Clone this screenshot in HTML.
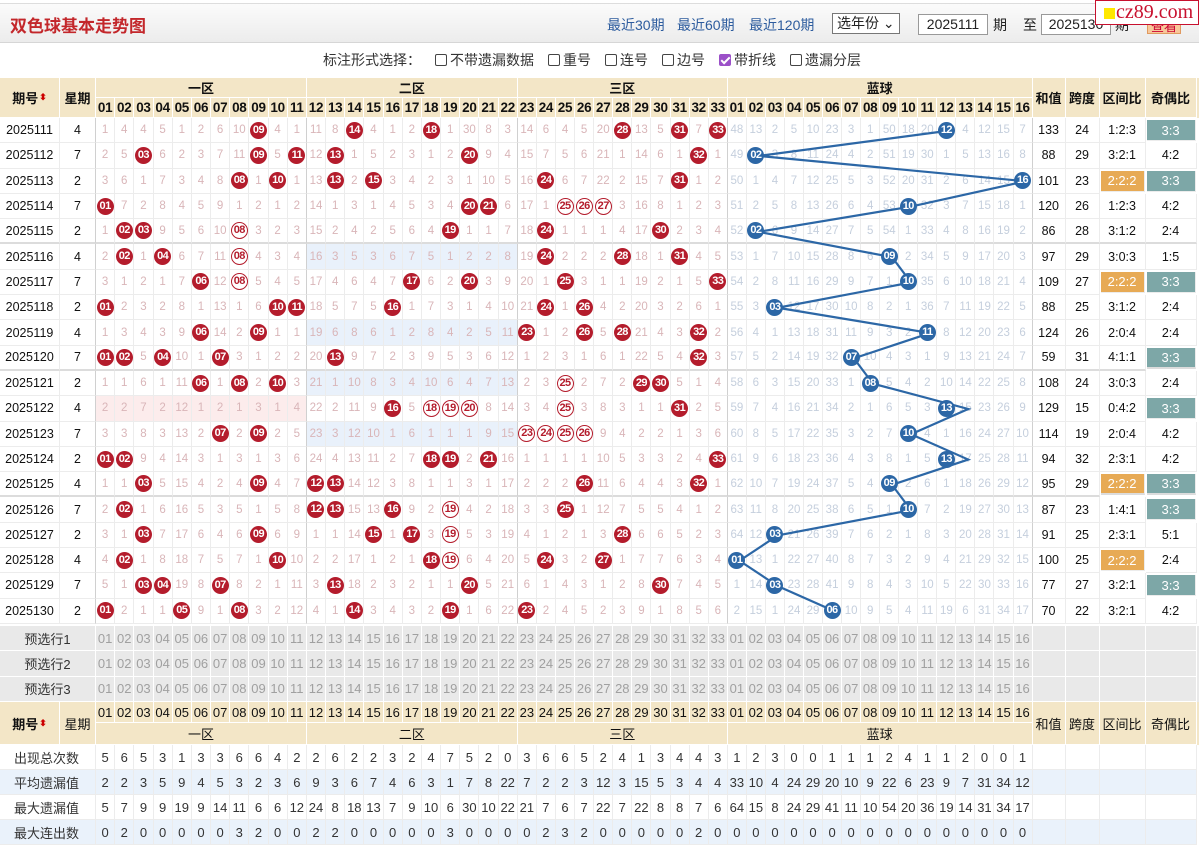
<!DOCTYPE html>
<html><head><meta charset="utf-8">
<style>
*{margin:0;padding:0;box-sizing:border-box}
body{width:1199px;height:849px;overflow:hidden;background:#fff;font-family:"Liberation Sans","Noto Sans CJK SC",sans-serif;position:relative;color:#222}
.top{position:absolute;left:0;top:3px;width:1199px;height:40px;background:linear-gradient(#fbfbfb,#ececec);border-top:1px solid #ddd;border-bottom:1px solid #d6d6d6}
.title{position:absolute;left:10px;top:8px;font-size:17px;font-weight:bold;color:#c3272b}
.lk{position:absolute;top:11px;font-size:14px;color:#2d5c9e}
.sel{position:absolute;left:832px;top:9px;width:68px;height:21px;border:1px solid #777;background:#fff;font-size:14px;padding-left:4px;line-height:19px}
.inp{position:absolute;top:10px;width:70px;height:21px;border:1px solid #999;background:#fff;font-size:14px;line-height:19px;text-align:center}
.tx{position:absolute;top:11px;font-size:14px}
.btn{position:absolute;left:1147px;top:11px;width:34px;height:19px;background:#f8c89a;border:1px solid #e09a60;color:#c03;font-size:13px;text-align:center}
.logo{position:absolute;left:1095px;top:0;width:104px;height:25px;background:#fff;border:1px solid #c8102e;font-family:"Liberation Serif",serif;font-size:20px;color:#c8102e;line-height:22px;padding-left:20px}
.logo:before{content:"";position:absolute;left:8px;top:7px;width:11px;height:11px;background:#ffe800}
.opt{position:absolute;top:50px;left:323px;font-size:14px;color:#333;white-space:nowrap}
.cb{display:inline-block;width:12px;height:12px;border:1px solid #444;border-radius:2px;vertical-align:-1px;margin:0 3px 0 14px;background:#fff}
.cb.on{background:#9b50c8;border-color:#9b50c8;position:relative}
.cb.on:after{content:"";position:absolute;left:3px;top:0;width:3px;height:7px;border:solid #fff;border-width:0 2px 2px 0;transform:rotate(45deg)}
.g{display:grid;grid-template-columns:60px 36px repeat(22,19.18px) repeat(11,19.1px) repeat(16,19.06px) 33px 34px 46px 51px;position:absolute;left:0;width:1199px}
.g>span,.r>span{display:flex;align-items:center;justify-content:center;border-right:1px solid #ececec;border-bottom:1px solid #ececec;font-size:12px;white-space:nowrap;overflow:visible}
.hd{top:78px;grid-template-rows:20px 20px;background:#f3e6c7}
.hd>span{border-color:#fff;font-weight:bold;font-size:13px;color:#111}
.hd .n{font-size:13.5px;letter-spacing:-0.3px}
.ar{color:#c00;font-size:9px;margin-left:1px}
.dat{top:118px;grid-auto-rows:25.3px}
.r{display:contents}
.r>span{height:25.3px;color:#d9b5b8;font-size:11.5px}
.r>span:nth-child(n+36):nth-child(-n+51){color:#c5cfdd}
.r>span:nth-child(1),.r>span:nth-child(2),.r>span:nth-child(n+52){color:#111;font-size:12.5px}
.r>span:nth-child(13),.r>span:nth-child(24),.r>span:nth-child(35){border-right:1px solid #d0d0d0}
.r>span:nth-child(2),.r>span:nth-child(51){border-right:1px solid #d0d0d0}
.r.e>span{border-bottom:2px solid #dcdcdc}
.r.z2>span:nth-child(n+14):nth-child(-n+24){background:#e9f1fb}
.r.z1>span:nth-child(n+3):nth-child(-n+13){background:#fcecec}
b,i,u{display:inline-block;flex:none;width:17px;height:17px;border-radius:50%;font-style:normal;text-decoration:none;font-weight:bold;font-size:11px;line-height:17px;text-align:center;letter-spacing:-0.6px}
b{background:#b41c2c;color:#fff}
i{background:#fff;border:1.5px solid #b41c2c;color:#b41c2c;line-height:14px}
u{background:#2c67a6;color:#fff;position:relative;z-index:2}
.r>span.t{background:#7da7a7;color:#fff;height:21px;margin:2px 1px;font-size:13px}
.r>span.o{background:#e7aa55;color:#fff;height:21px;margin:2px 1px;font-size:13px}
svg{position:absolute;left:0;top:0;z-index:1;pointer-events:none}
.pre{grid-template-rows:repeat(3,25.3px);top:626px;background:#e9e9e9}
.pre>span{border-color:#fff;color:#a0a0a0;font-size:13px}
.pre .lb{grid-column:1/3;color:#333}
.ft{top:702px;grid-template-rows:21px 22px;background:#f3e6c7}
.ft>span{border-color:#fff;font-size:13px;color:#111}
.st{top:745px;grid-template-rows:repeat(4,25px)}
.st>span{font-size:13px;color:#333}
.st .lb{grid-column:1/3;justify-content:flex-start;padding-left:14px}
.st .b{background:#eaf2fb}
</style></head><body>
<div class="top">
<div class="title">双色球基本走势图</div>
<div class="lk" style="left:607px">最近30期</div><div class="lk" style="left:677px">最近60期</div><div class="lk" style="left:749px">最近120期</div>
<div class="sel">选年份 ⌄</div>
<div class="inp" style="left:918px">2025111</div><div class="tx" style="left:993px">期</div><div class="tx" style="left:1023px">至</div>
<div class="inp" style="left:1041px">2025130</div><div class="tx" style="left:1115px">期</div>
<div class="btn">查看</div>
</div>
<div class="logo">cz89.com</div>
<div class="opt">标注形式选择：<span class="cb"></span>不带遗漏数据<span class="cb"></span>重号<span class="cb"></span>连号<span class="cb"></span>边号<span class="cb on"></span>带折线<span class="cb"></span>遗漏分层</div>

<div class="g hd">
<span style="grid-row:1/3;grid-column:1">期号<span class="ar">⬍</span></span><span style="grid-row:1/3;grid-column:2">星期</span>
<span style="grid-column:3/14">一区</span><span style="grid-column:14/25">二区</span><span style="grid-column:25/36">三区</span><span style="grid-column:36/52">蓝球</span>
<span style="grid-row:1/3;grid-column:52">和值</span><span style="grid-row:1/3;grid-column:53">跨度</span><span style="grid-row:1/3;grid-column:54">区间比</span><span style="grid-row:1/3;grid-column:55">奇偶比</span>
<span class="n" style="grid-row:2;grid-column:3">01</span><span class="n" style="grid-row:2">02</span><span class="n" style="grid-row:2">03</span><span class="n" style="grid-row:2">04</span><span class="n" style="grid-row:2">05</span><span class="n" style="grid-row:2">06</span><span class="n" style="grid-row:2">07</span><span class="n" style="grid-row:2">08</span><span class="n" style="grid-row:2">09</span><span class="n" style="grid-row:2">10</span><span class="n" style="grid-row:2">11</span><span class="n" style="grid-row:2">12</span><span class="n" style="grid-row:2">13</span><span class="n" style="grid-row:2">14</span><span class="n" style="grid-row:2">15</span><span class="n" style="grid-row:2">16</span><span class="n" style="grid-row:2">17</span><span class="n" style="grid-row:2">18</span><span class="n" style="grid-row:2">19</span><span class="n" style="grid-row:2">20</span><span class="n" style="grid-row:2">21</span><span class="n" style="grid-row:2">22</span><span class="n" style="grid-row:2">23</span><span class="n" style="grid-row:2">24</span><span class="n" style="grid-row:2">25</span><span class="n" style="grid-row:2">26</span><span class="n" style="grid-row:2">27</span><span class="n" style="grid-row:2">28</span><span class="n" style="grid-row:2">29</span><span class="n" style="grid-row:2">30</span><span class="n" style="grid-row:2">31</span><span class="n" style="grid-row:2">32</span><span class="n" style="grid-row:2">33</span><span class="n" style="grid-row:2">01</span><span class="n" style="grid-row:2">02</span><span class="n" style="grid-row:2">03</span><span class="n" style="grid-row:2">04</span><span class="n" style="grid-row:2">05</span><span class="n" style="grid-row:2">06</span><span class="n" style="grid-row:2">07</span><span class="n" style="grid-row:2">08</span><span class="n" style="grid-row:2">09</span><span class="n" style="grid-row:2">10</span><span class="n" style="grid-row:2">11</span><span class="n" style="grid-row:2">12</span><span class="n" style="grid-row:2">13</span><span class="n" style="grid-row:2">14</span><span class="n" style="grid-row:2">15</span><span class="n" style="grid-row:2">16</span>
</div>

<div class="g dat">
<div class="r"><span>2025111</span><span>4</span><span>1</span><span>4</span><span>4</span><span>5</span><span>1</span><span>2</span><span>6</span><span>10</span><span><b>09</b></span><span>4</span><span>1</span><span>11</span><span>8</span><span><b>14</b></span><span>4</span><span>1</span><span>2</span><span><b>18</b></span><span>1</span><span>30</span><span>8</span><span>3</span><span>14</span><span>6</span><span>4</span><span>5</span><span>20</span><span><b>28</b></span><span>13</span><span>5</span><span><b>31</b></span><span>7</span><span><b>33</b></span><span>48</span><span>13</span><span>2</span><span>5</span><span>10</span><span>23</span><span>3</span><span>1</span><span>50</span><span>18</span><span>20</span><span><u>12</u></span><span>4</span><span>12</span><span>15</span><span>7</span><span>133</span><span>24</span><span>1:2:3</span><span class="t">3:3</span></div>
<div class="r"><span>2025112</span><span>7</span><span>2</span><span>5</span><span><b>03</b></span><span>6</span><span>2</span><span>3</span><span>7</span><span>11</span><span><b>09</b></span><span>5</span><span><b>11</b></span><span>12</span><span><b>13</b></span><span>1</span><span>5</span><span>2</span><span>3</span><span>1</span><span>2</span><span><b>20</b></span><span>9</span><span>4</span><span>15</span><span>7</span><span>5</span><span>6</span><span>21</span><span>1</span><span>14</span><span>6</span><span>1</span><span><b>32</b></span><span>1</span><span>49</span><span><u>02</u></span><span>3</span><span>8</span><span>11</span><span>24</span><span>4</span><span>2</span><span>51</span><span>19</span><span>30</span><span>1</span><span>5</span><span>13</span><span>16</span><span>8</span><span>88</span><span>29</span><span>3:2:1</span><span>4:2</span></div>
<div class="r"><span>2025113</span><span>2</span><span>3</span><span>6</span><span>1</span><span>7</span><span>3</span><span>4</span><span>8</span><span><b>08</b></span><span>1</span><span><b>10</b></span><span>1</span><span>13</span><span><b>13</b></span><span>2</span><span><b>15</b></span><span>3</span><span>4</span><span>2</span><span>3</span><span>1</span><span>10</span><span>5</span><span>16</span><span><b>24</b></span><span>6</span><span>7</span><span>22</span><span>2</span><span>15</span><span>7</span><span><b>31</b></span><span>1</span><span>2</span><span>50</span><span>1</span><span>4</span><span>7</span><span>12</span><span>25</span><span>5</span><span>3</span><span>52</span><span>20</span><span>31</span><span>2</span><span>6</span><span>14</span><span>15</span><span><u>16</u></span><span>101</span><span>23</span><span class="o">2:2:2</span><span class="t">3:3</span></div>
<div class="r"><span>2025114</span><span>7</span><span><b>01</b></span><span>7</span><span>2</span><span>8</span><span>4</span><span>5</span><span>9</span><span>1</span><span>2</span><span>1</span><span>2</span><span>14</span><span>1</span><span>3</span><span>1</span><span>4</span><span>5</span><span>3</span><span>4</span><span><b>20</b></span><span><b>21</b></span><span>6</span><span>17</span><span>1</span><span><i>25</i></span><span><i>26</i></span><span><i>27</i></span><span>3</span><span>16</span><span>8</span><span>1</span><span>2</span><span>3</span><span>51</span><span>2</span><span>5</span><span>8</span><span>13</span><span>26</span><span>6</span><span>4</span><span>53</span><span><u>10</u></span><span>32</span><span>3</span><span>7</span><span>15</span><span>18</span><span>1</span><span>120</span><span>26</span><span>1:2:3</span><span>4:2</span></div>
<div class="r e"><span>2025115</span><span>2</span><span>1</span><span><b>02</b></span><span><b>03</b></span><span>9</span><span>5</span><span>6</span><span>10</span><span><i>08</i></span><span>3</span><span>2</span><span>3</span><span>15</span><span>2</span><span>4</span><span>2</span><span>5</span><span>6</span><span>4</span><span><b>19</b></span><span>1</span><span>1</span><span>7</span><span>18</span><span><b>24</b></span><span>1</span><span>1</span><span>1</span><span>4</span><span>17</span><span><b>30</b></span><span>2</span><span>3</span><span>4</span><span>52</span><span><u>02</u></span><span>6</span><span>9</span><span>14</span><span>27</span><span>7</span><span>5</span><span>54</span><span>1</span><span>33</span><span>4</span><span>8</span><span>16</span><span>19</span><span>2</span><span>86</span><span>28</span><span>3:1:2</span><span>2:4</span></div>
<div class="r z2"><span>2025116</span><span>4</span><span>2</span><span><b>02</b></span><span>1</span><span><b>04</b></span><span>6</span><span>7</span><span>11</span><span><i>08</i></span><span>4</span><span>3</span><span>4</span><span>16</span><span>3</span><span>5</span><span>3</span><span>6</span><span>7</span><span>5</span><span>1</span><span>2</span><span>2</span><span>8</span><span>19</span><span><b>24</b></span><span>2</span><span>2</span><span>2</span><span><b>28</b></span><span>18</span><span>1</span><span><b>31</b></span><span>4</span><span>5</span><span>53</span><span>1</span><span>7</span><span>10</span><span>15</span><span>28</span><span>8</span><span>6</span><span><u>09</u></span><span>2</span><span>34</span><span>5</span><span>9</span><span>17</span><span>20</span><span>3</span><span>97</span><span>29</span><span>3:0:3</span><span>1:5</span></div>
<div class="r"><span>2025117</span><span>7</span><span>3</span><span>1</span><span>2</span><span>1</span><span>7</span><span><b>06</b></span><span>12</span><span><i>08</i></span><span>5</span><span>4</span><span>5</span><span>17</span><span>4</span><span>6</span><span>4</span><span>7</span><span><b>17</b></span><span>6</span><span>2</span><span><b>20</b></span><span>3</span><span>9</span><span>20</span><span>1</span><span><b>25</b></span><span>3</span><span>1</span><span>1</span><span>19</span><span>2</span><span>1</span><span>5</span><span><b>33</b></span><span>54</span><span>2</span><span>8</span><span>11</span><span>16</span><span>29</span><span>9</span><span>7</span><span>1</span><span><u>10</u></span><span>35</span><span>6</span><span>10</span><span>18</span><span>21</span><span>4</span><span>109</span><span>27</span><span class="o">2:2:2</span><span class="t">3:3</span></div>
<div class="r"><span>2025118</span><span>2</span><span><b>01</b></span><span>2</span><span>3</span><span>2</span><span>8</span><span>1</span><span>13</span><span>1</span><span>6</span><span><b>10</b></span><span><b>11</b></span><span>18</span><span>5</span><span>7</span><span>5</span><span><b>16</b></span><span>1</span><span>7</span><span>3</span><span>1</span><span>4</span><span>10</span><span>21</span><span><b>24</b></span><span>1</span><span><b>26</b></span><span>4</span><span>2</span><span>20</span><span>3</span><span>2</span><span>6</span><span>1</span><span>55</span><span>3</span><span><u>03</u></span><span>12</span><span>17</span><span>30</span><span>10</span><span>8</span><span>2</span><span>1</span><span>36</span><span>7</span><span>11</span><span>19</span><span>22</span><span>5</span><span>88</span><span>25</span><span>3:1:2</span><span>2:4</span></div>
<div class="r z2"><span>2025119</span><span>4</span><span>1</span><span>3</span><span>4</span><span>3</span><span>9</span><span><b>06</b></span><span>14</span><span>2</span><span><b>09</b></span><span>1</span><span>1</span><span>19</span><span>6</span><span>8</span><span>6</span><span>1</span><span>2</span><span>8</span><span>4</span><span>2</span><span>5</span><span>11</span><span><b>23</b></span><span>1</span><span>2</span><span><b>26</b></span><span>5</span><span><b>28</b></span><span>21</span><span>4</span><span>3</span><span><b>32</b></span><span>2</span><span>56</span><span>4</span><span>1</span><span>13</span><span>18</span><span>31</span><span>11</span><span>9</span><span>3</span><span>2</span><span><u>11</u></span><span>8</span><span>12</span><span>20</span><span>23</span><span>6</span><span>124</span><span>26</span><span>2:0:4</span><span>2:4</span></div>
<div class="r e"><span>2025120</span><span>7</span><span><b>01</b></span><span><b>02</b></span><span>5</span><span><b>04</b></span><span>10</span><span>1</span><span><b>07</b></span><span>3</span><span>1</span><span>2</span><span>2</span><span>20</span><span><b>13</b></span><span>9</span><span>7</span><span>2</span><span>3</span><span>9</span><span>5</span><span>3</span><span>6</span><span>12</span><span>1</span><span>2</span><span>3</span><span>1</span><span>6</span><span>1</span><span>22</span><span>5</span><span>4</span><span><b>32</b></span><span>3</span><span>57</span><span>5</span><span>2</span><span>14</span><span>19</span><span>32</span><span><u>07</u></span><span>10</span><span>4</span><span>3</span><span>1</span><span>9</span><span>13</span><span>21</span><span>24</span><span>7</span><span>59</span><span>31</span><span>4:1:1</span><span class="t">3:3</span></div>
<div class="r z2"><span>2025121</span><span>2</span><span>1</span><span>1</span><span>6</span><span>1</span><span>11</span><span><b>06</b></span><span>1</span><span><b>08</b></span><span>2</span><span><b>10</b></span><span>3</span><span>21</span><span>1</span><span>10</span><span>8</span><span>3</span><span>4</span><span>10</span><span>6</span><span>4</span><span>7</span><span>13</span><span>2</span><span>3</span><span><i>25</i></span><span>2</span><span>7</span><span>2</span><span><b>29</b></span><span><b>30</b></span><span>5</span><span>1</span><span>4</span><span>58</span><span>6</span><span>3</span><span>15</span><span>20</span><span>33</span><span>1</span><span><u>08</u></span><span>5</span><span>4</span><span>2</span><span>10</span><span>14</span><span>22</span><span>25</span><span>8</span><span>108</span><span>24</span><span>3:0:3</span><span>2:4</span></div>
<div class="r z1"><span>2025122</span><span>4</span><span>2</span><span>2</span><span>7</span><span>2</span><span>12</span><span>1</span><span>2</span><span>1</span><span>3</span><span>1</span><span>4</span><span>22</span><span>2</span><span>11</span><span>9</span><span><b>16</b></span><span>5</span><span><i>18</i></span><span><i>19</i></span><span><i>20</i></span><span>8</span><span>14</span><span>3</span><span>4</span><span><i>25</i></span><span>3</span><span>8</span><span>3</span><span>1</span><span>1</span><span><b>31</b></span><span>2</span><span>5</span><span>59</span><span>7</span><span>4</span><span>16</span><span>21</span><span>34</span><span>2</span><span>1</span><span>6</span><span>5</span><span>3</span><span><u>13</u></span><span>15</span><span>23</span><span>26</span><span>9</span><span>129</span><span>15</span><span>0:4:2</span><span class="t">3:3</span></div>
<div class="r z2"><span>2025123</span><span>7</span><span>3</span><span>3</span><span>8</span><span>3</span><span>13</span><span>2</span><span><b>07</b></span><span>2</span><span><b>09</b></span><span>2</span><span>5</span><span>23</span><span>3</span><span>12</span><span>10</span><span>1</span><span>6</span><span>1</span><span>1</span><span>1</span><span>9</span><span>15</span><span><i>23</i></span><span><i>24</i></span><span><i>25</i></span><span><i>26</i></span><span>9</span><span>4</span><span>2</span><span>2</span><span>1</span><span>3</span><span>6</span><span>60</span><span>8</span><span>5</span><span>17</span><span>22</span><span>35</span><span>3</span><span>2</span><span>7</span><span><u>10</u></span><span>4</span><span>1</span><span>16</span><span>24</span><span>27</span><span>10</span><span>114</span><span>19</span><span>2:0:4</span><span>4:2</span></div>
<div class="r"><span>2025124</span><span>2</span><span><b>01</b></span><span><b>02</b></span><span>9</span><span>4</span><span>14</span><span>3</span><span>1</span><span>3</span><span>1</span><span>3</span><span>6</span><span>24</span><span>4</span><span>13</span><span>11</span><span>2</span><span>7</span><span><b>18</b></span><span><b>19</b></span><span>2</span><span><b>21</b></span><span>16</span><span>1</span><span>1</span><span>1</span><span>1</span><span>10</span><span>5</span><span>3</span><span>3</span><span>2</span><span>4</span><span><b>33</b></span><span>61</span><span>9</span><span>6</span><span>18</span><span>23</span><span>36</span><span>4</span><span>3</span><span>8</span><span>1</span><span>5</span><span><u>13</u></span><span>17</span><span>25</span><span>28</span><span>11</span><span>94</span><span>32</span><span>2:3:1</span><span>4:2</span></div>
<div class="r e"><span>2025125</span><span>4</span><span>1</span><span>1</span><span><b>03</b></span><span>5</span><span>15</span><span>4</span><span>2</span><span>4</span><span><b>09</b></span><span>4</span><span>7</span><span><b>12</b></span><span><b>13</b></span><span>14</span><span>12</span><span>3</span><span>8</span><span>1</span><span>1</span><span>3</span><span>1</span><span>17</span><span>2</span><span>2</span><span>2</span><span><b>26</b></span><span>11</span><span>6</span><span>4</span><span>4</span><span>3</span><span><b>32</b></span><span>1</span><span>62</span><span>10</span><span>7</span><span>19</span><span>24</span><span>37</span><span>5</span><span>4</span><span><u>09</u></span><span>2</span><span>6</span><span>1</span><span>18</span><span>26</span><span>29</span><span>12</span><span>95</span><span>29</span><span class="o">2:2:2</span><span class="t">3:3</span></div>
<div class="r"><span>2025126</span><span>7</span><span>2</span><span><b>02</b></span><span>1</span><span>6</span><span>16</span><span>5</span><span>3</span><span>5</span><span>1</span><span>5</span><span>8</span><span><b>12</b></span><span><b>13</b></span><span>15</span><span>13</span><span><b>16</b></span><span>9</span><span>2</span><span><i>19</i></span><span>4</span><span>2</span><span>18</span><span>3</span><span>3</span><span><b>25</b></span><span>1</span><span>12</span><span>7</span><span>5</span><span>5</span><span>4</span><span>1</span><span>2</span><span>63</span><span>11</span><span>8</span><span>20</span><span>25</span><span>38</span><span>6</span><span>5</span><span>1</span><span><u>10</u></span><span>7</span><span>2</span><span>19</span><span>27</span><span>30</span><span>13</span><span>87</span><span>23</span><span>1:4:1</span><span class="t">3:3</span></div>
<div class="r"><span>2025127</span><span>2</span><span>3</span><span>1</span><span><b>03</b></span><span>7</span><span>17</span><span>6</span><span>4</span><span>6</span><span><b>09</b></span><span>6</span><span>9</span><span>1</span><span>1</span><span>14</span><span><b>15</b></span><span>1</span><span><b>17</b></span><span>3</span><span><i>19</i></span><span>5</span><span>3</span><span>19</span><span>4</span><span>1</span><span>2</span><span>1</span><span>3</span><span><b>28</b></span><span>6</span><span>6</span><span>5</span><span>2</span><span>3</span><span>64</span><span>12</span><span><u>03</u></span><span>21</span><span>26</span><span>39</span><span>7</span><span>6</span><span>2</span><span>1</span><span>8</span><span>3</span><span>20</span><span>28</span><span>31</span><span>14</span><span>91</span><span>25</span><span>2:3:1</span><span>5:1</span></div>
<div class="r"><span>2025128</span><span>4</span><span>4</span><span><b>02</b></span><span>1</span><span>8</span><span>18</span><span>7</span><span>5</span><span>7</span><span>1</span><span><b>10</b></span><span>10</span><span>2</span><span>2</span><span>17</span><span>1</span><span>2</span><span>1</span><span><b>18</b></span><span><i>19</i></span><span>6</span><span>4</span><span>20</span><span>5</span><span><b>24</b></span><span>3</span><span>2</span><span><b>27</b></span><span>1</span><span>7</span><span>7</span><span>6</span><span>3</span><span>4</span><span><u>01</u></span><span>13</span><span>1</span><span>22</span><span>27</span><span>40</span><span>8</span><span>7</span><span>3</span><span>2</span><span>9</span><span>4</span><span>21</span><span>29</span><span>32</span><span>15</span><span>100</span><span>25</span><span class="o">2:2:2</span><span>2:4</span></div>
<div class="r"><span>2025129</span><span>7</span><span>5</span><span>1</span><span><b>03</b></span><span><b>04</b></span><span>19</span><span>8</span><span><b>07</b></span><span>8</span><span>2</span><span>1</span><span>11</span><span>3</span><span><b>13</b></span><span>18</span><span>2</span><span>3</span><span>2</span><span>1</span><span>1</span><span><b>20</b></span><span>5</span><span>21</span><span>6</span><span>1</span><span>4</span><span>3</span><span>1</span><span>2</span><span>8</span><span><b>30</b></span><span>7</span><span>4</span><span>5</span><span>1</span><span>14</span><span><u>03</u></span><span>23</span><span>28</span><span>41</span><span>9</span><span>8</span><span>4</span><span>3</span><span>10</span><span>5</span><span>22</span><span>30</span><span>33</span><span>16</span><span>77</span><span>27</span><span>3:2:1</span><span class="t">3:3</span></div>
<div class="r"><span>2025130</span><span>2</span><span><b>01</b></span><span>2</span><span>1</span><span>1</span><span><b>05</b></span><span>9</span><span>1</span><span><b>08</b></span><span>3</span><span>2</span><span>12</span><span>4</span><span>1</span><span><b>14</b></span><span>3</span><span>4</span><span>3</span><span>2</span><span><b>19</b></span><span>1</span><span>6</span><span>22</span><span><b>23</b></span><span>2</span><span>4</span><span>5</span><span>2</span><span>3</span><span>9</span><span>1</span><span>8</span><span>5</span><span>6</span><span>2</span><span>15</span><span>1</span><span>24</span><span>29</span><span><u>06</u></span><span>10</span><span>9</span><span>5</span><span>4</span><span>11</span><span>19</span><span>6</span><span>31</span><span>34</span><span>17</span><span>70</span><span>22</span><span>3:2:1</span><span>4:2</span></div>
</div>
<svg width="1199" height="849"><polyline fill="none" stroke="#2c67a6" stroke-width="2.2" points="949.2,130.65 758.6,155.95 1025.4,181.25 911,206.55 758.6,231.85 892,257.15 911,282.45 777.6,307.75 930.1,333.05 853.9,358.35 872.9,383.65 968.2,408.95 911,434.25 968.2,459.55 892,484.85 911,510.15 777.6,535.45 739.5,560.75 777.6,586.05 834.8,611.35"/></svg>

<div class="g pre">
<span class="lb">预选行1</span><span>01</span><span>02</span><span>03</span><span>04</span><span>05</span><span>06</span><span>07</span><span>08</span><span>09</span><span>10</span><span>11</span><span>12</span><span>13</span><span>14</span><span>15</span><span>16</span><span>17</span><span>18</span><span>19</span><span>20</span><span>21</span><span>22</span><span>23</span><span>24</span><span>25</span><span>26</span><span>27</span><span>28</span><span>29</span><span>30</span><span>31</span><span>32</span><span>33</span><span>01</span><span>02</span><span>03</span><span>04</span><span>05</span><span>06</span><span>07</span><span>08</span><span>09</span><span>10</span><span>11</span><span>12</span><span>13</span><span>14</span><span>15</span><span>16</span><span></span><span></span><span></span><span></span>
<span class="lb">预选行2</span><span>01</span><span>02</span><span>03</span><span>04</span><span>05</span><span>06</span><span>07</span><span>08</span><span>09</span><span>10</span><span>11</span><span>12</span><span>13</span><span>14</span><span>15</span><span>16</span><span>17</span><span>18</span><span>19</span><span>20</span><span>21</span><span>22</span><span>23</span><span>24</span><span>25</span><span>26</span><span>27</span><span>28</span><span>29</span><span>30</span><span>31</span><span>32</span><span>33</span><span>01</span><span>02</span><span>03</span><span>04</span><span>05</span><span>06</span><span>07</span><span>08</span><span>09</span><span>10</span><span>11</span><span>12</span><span>13</span><span>14</span><span>15</span><span>16</span><span></span><span></span><span></span><span></span>
<span class="lb">预选行3</span><span>01</span><span>02</span><span>03</span><span>04</span><span>05</span><span>06</span><span>07</span><span>08</span><span>09</span><span>10</span><span>11</span><span>12</span><span>13</span><span>14</span><span>15</span><span>16</span><span>17</span><span>18</span><span>19</span><span>20</span><span>21</span><span>22</span><span>23</span><span>24</span><span>25</span><span>26</span><span>27</span><span>28</span><span>29</span><span>30</span><span>31</span><span>32</span><span>33</span><span>01</span><span>02</span><span>03</span><span>04</span><span>05</span><span>06</span><span>07</span><span>08</span><span>09</span><span>10</span><span>11</span><span>12</span><span>13</span><span>14</span><span>15</span><span>16</span><span></span><span></span><span></span><span></span>
</div>

<div class="g ft">
<span style="grid-row:1/3;grid-column:1;font-weight:bold">期号<span class="ar">⬍</span></span><span style="grid-row:1/3;grid-column:2">星期</span>
<span style="grid-row:1/3;grid-column:52">和值</span><span style="grid-row:1/3;grid-column:53">跨度</span><span style="grid-row:1/3;grid-column:54">区间比</span><span style="grid-row:1/3;grid-column:55">奇偶比</span>
<span style="grid-row:1;grid-column:3">01</span><span>02</span><span>03</span><span>04</span><span>05</span><span>06</span><span>07</span><span>08</span><span>09</span><span>10</span><span>11</span><span>12</span><span>13</span><span>14</span><span>15</span><span>16</span><span>17</span><span>18</span><span>19</span><span>20</span><span>21</span><span>22</span><span>23</span><span>24</span><span>25</span><span>26</span><span>27</span><span>28</span><span>29</span><span>30</span><span>31</span><span>32</span><span>33</span><span>01</span><span>02</span><span>03</span><span>04</span><span>05</span><span>06</span><span>07</span><span>08</span><span>09</span><span>10</span><span>11</span><span>12</span><span>13</span><span>14</span><span>15</span><span>16</span>
<span style="grid-row:2;grid-column:3/14">一区</span><span style="grid-row:2;grid-column:14/25">二区</span><span style="grid-row:2;grid-column:25/36">三区</span><span style="grid-row:2;grid-column:36/52">蓝球</span>
</div>

<div class="g st">
<span class="lb">出现总次数</span><span>5</span><span>6</span><span>5</span><span>3</span><span>1</span><span>3</span><span>3</span><span>6</span><span>6</span><span>4</span><span>2</span><span>2</span><span>6</span><span>2</span><span>2</span><span>3</span><span>2</span><span>4</span><span>7</span><span>5</span><span>2</span><span>0</span><span>3</span><span>6</span><span>6</span><span>5</span><span>2</span><span>4</span><span>1</span><span>3</span><span>4</span><span>4</span><span>3</span><span>1</span><span>2</span><span>3</span><span>0</span><span>0</span><span>1</span><span>1</span><span>1</span><span>2</span><span>4</span><span>1</span><span>1</span><span>2</span><span>0</span><span>0</span><span>1</span><span></span><span></span><span></span><span></span>
<span class="lb b">平均遗漏值</span><span class="b">2</span><span class="b">2</span><span class="b">3</span><span class="b">5</span><span class="b">9</span><span class="b">4</span><span class="b">5</span><span class="b">3</span><span class="b">2</span><span class="b">3</span><span class="b">6</span><span class="b">9</span><span class="b">3</span><span class="b">6</span><span class="b">7</span><span class="b">4</span><span class="b">6</span><span class="b">3</span><span class="b">1</span><span class="b">7</span><span class="b">8</span><span class="b">22</span><span class="b">7</span><span class="b">2</span><span class="b">2</span><span class="b">3</span><span class="b">12</span><span class="b">3</span><span class="b">15</span><span class="b">5</span><span class="b">3</span><span class="b">4</span><span class="b">4</span><span class="b">33</span><span class="b">10</span><span class="b">4</span><span class="b">24</span><span class="b">29</span><span class="b">20</span><span class="b">10</span><span class="b">9</span><span class="b">22</span><span class="b">6</span><span class="b">23</span><span class="b">9</span><span class="b">7</span><span class="b">31</span><span class="b">34</span><span class="b">12</span><span class="b"></span><span class="b"></span><span class="b"></span><span class="b"></span>
<span class="lb">最大遗漏值</span><span>5</span><span>7</span><span>9</span><span>9</span><span>19</span><span>9</span><span>14</span><span>11</span><span>6</span><span>6</span><span>12</span><span>24</span><span>8</span><span>18</span><span>13</span><span>7</span><span>9</span><span>10</span><span>6</span><span>30</span><span>10</span><span>22</span><span>21</span><span>7</span><span>6</span><span>7</span><span>22</span><span>7</span><span>22</span><span>8</span><span>8</span><span>7</span><span>6</span><span>64</span><span>15</span><span>8</span><span>24</span><span>29</span><span>41</span><span>11</span><span>10</span><span>54</span><span>20</span><span>36</span><span>19</span><span>14</span><span>31</span><span>34</span><span>17</span><span></span><span></span><span></span><span></span>
<span class="lb b">最大连出数</span><span class="b">0</span><span class="b">2</span><span class="b">0</span><span class="b">0</span><span class="b">0</span><span class="b">0</span><span class="b">0</span><span class="b">3</span><span class="b">2</span><span class="b">0</span><span class="b">0</span><span class="b">2</span><span class="b">2</span><span class="b">0</span><span class="b">0</span><span class="b">0</span><span class="b">0</span><span class="b">0</span><span class="b">3</span><span class="b">0</span><span class="b">0</span><span class="b">0</span><span class="b">0</span><span class="b">2</span><span class="b">3</span><span class="b">2</span><span class="b">0</span><span class="b">0</span><span class="b">0</span><span class="b">0</span><span class="b">0</span><span class="b">2</span><span class="b">0</span><span class="b">0</span><span class="b">0</span><span class="b">0</span><span class="b">0</span><span class="b">0</span><span class="b">0</span><span class="b">0</span><span class="b">0</span><span class="b">0</span><span class="b">0</span><span class="b">0</span><span class="b">0</span><span class="b">0</span><span class="b">0</span><span class="b">0</span><span class="b">0</span><span class="b"></span><span class="b"></span><span class="b"></span><span class="b"></span>
</div>
</body></html>
